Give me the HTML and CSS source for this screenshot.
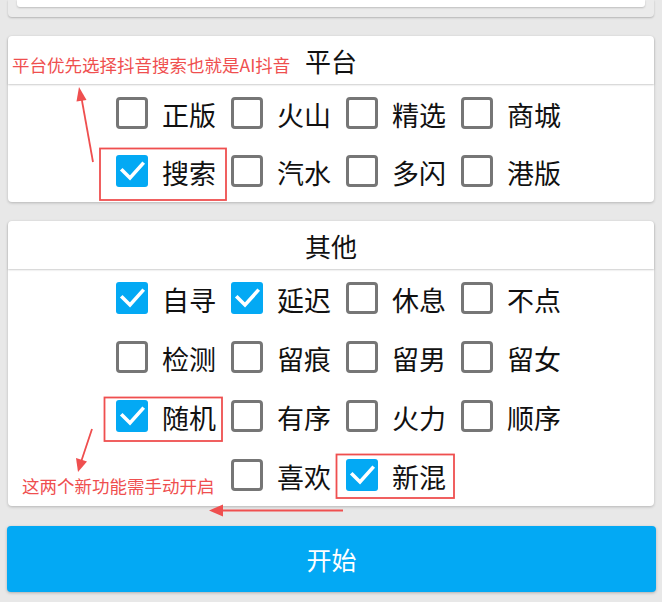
FILE: index.html
```html
<!DOCTYPE html>
<html lang="zh-CN">
<head>
<meta charset="utf-8">
<title>设置</title>
<link rel="stylesheet" href="styles.css">
</head>
<body>
<div class="page">
  <div class="top-panel"><div class="top-card"></div></div>

  <section class="panel">
    <div class="panel-head">平台</div>
    <div class="options options-platform">
      <div class="row">
        <label class="item"><span class="box"></span><span class="label">正版</span></label>
        <label class="item"><span class="box"></span><span class="label">火山</span></label>
        <label class="item"><span class="box"></span><span class="label">精选</span></label>
        <label class="item"><span class="box"></span><span class="label">商城</span></label>
      </div>
      <div class="row">
        <label class="item"><span class="box checked"><svg viewBox="0 0 32 32"><path d="M6.5 15.5 L14 23 L26.5 9"/></svg></span><span class="label">搜索</span></label>
        <label class="item"><span class="box"></span><span class="label">汽水</span></label>
        <label class="item"><span class="box"></span><span class="label">多闪</span></label>
        <label class="item"><span class="box"></span><span class="label">港版</span></label>
      </div>
    </div>
  </section>

  <section class="panel">
    <div class="panel-head">其他</div>
    <div class="options options-other">
      <div class="row">
        <label class="item"><span class="box checked"><svg viewBox="0 0 32 32"><path d="M6.5 15.5 L14 23 L26.5 9"/></svg></span><span class="label">自寻</span></label>
        <label class="item"><span class="box checked"><svg viewBox="0 0 32 32"><path d="M6.5 15.5 L14 23 L26.5 9"/></svg></span><span class="label">延迟</span></label>
        <label class="item"><span class="box"></span><span class="label">休息</span></label>
        <label class="item"><span class="box"></span><span class="label">不点</span></label>
      </div>
      <div class="row">
        <label class="item"><span class="box"></span><span class="label">检测</span></label>
        <label class="item"><span class="box"></span><span class="label">留痕</span></label>
        <label class="item"><span class="box"></span><span class="label">留男</span></label>
        <label class="item"><span class="box"></span><span class="label">留女</span></label>
      </div>
      <div class="row">
        <label class="item"><span class="box checked"><svg viewBox="0 0 32 32"><path d="M6.5 15.5 L14 23 L26.5 9"/></svg></span><span class="label">随机</span></label>
        <label class="item"><span class="box"></span><span class="label">有序</span></label>
        <label class="item"><span class="box"></span><span class="label">火力</span></label>
        <label class="item"><span class="box"></span><span class="label">顺序</span></label>
      </div>
      <div class="row">
        <label class="item"><span class="box"></span><span class="label">喜欢</span></label>
        <label class="item"><span class="box checked"><svg viewBox="0 0 32 32"><path d="M6.5 15.5 L14 23 L26.5 9"/></svg></span><span class="label">新混</span></label>
      </div>
    </div>
  </section>

  <button class="start" type="button">开始</button>

  <svg class="annot" viewBox="0 0 662 602" width="662" height="602">
    <g fill="none" stroke="#ef4f4f" stroke-width="1.8">
      <rect x="100" y="148.5" width="126" height="51.5"/>
      <rect x="104.5" y="397.5" width="117.5" height="43.5"/>
      <rect x="336.5" y="454.5" width="117.5" height="43.5"/>
      <line x1="93" y1="162" x2="81.5" y2="98"/>
      <line x1="92" y1="429" x2="81" y2="462"/>
      <line x1="343" y1="510.5" x2="220" y2="510.5"/>
    </g>
    <g fill="#ef4f4f">
      <polygon points="79,87 76.5,101.5 86.5,100"/>
      <polygon points="78,472 76,458 87,461.5"/>
      <polygon points="209,510.5 223,504.5 223,516.5"/>
    </g>
  </svg>
  <span class="note note-platform">平台优先选择抖音搜索也就是AI抖音</span>
  <span class="note note-new">这两个新功能需手动开启</span>
</div>
</body>
</html>
```

FILE: styles.css
```css
* { box-sizing: border-box; }

html, body {
  margin: 0;
  padding: 0;
}

body {
  background: #e8e8e8;
  font-family: "Noto Sans CJK SC", "Noto Sans", sans-serif;
  color: #111;
  width: 662px;
  height: 602px;
  overflow: hidden;
}

.page {
  position: relative;
  width: 662px;
  height: 602px;
  display: flex;
  flex-direction: column;
}

.top-panel {
  margin: 0 8px;
  height: 17px;
  background: #ebebeb;
  border-radius: 0 0 4px 4px;
  box-shadow: 0 1px 2px rgba(0, 0, 0, 0.22);
}

.top-card {
  margin: 0 9px;
  height: 7px;
  background: #fff;
  border-radius: 0 0 3px 3px;
  box-shadow: 0 1px 2px rgba(0, 0, 0, 0.2);
}

.panel {
  margin: 19px 8px 0;
  background: #fff;
  border-radius: 4px;
  box-shadow: 0 1px 3px rgba(0, 0, 0, 0.22);
  display: flex;
  flex-direction: column;
}

.panel-head {
  position: relative;
  height: 48px;
  display: flex;
  align-items: center;
  justify-content: center;
  font-size: 26px;
  line-height: 1;
  padding-top: 2px;
  color: #111;
  border-radius: 4px 4px 0 0;
  box-shadow: 0 1px 2px rgba(0, 0, 0, 0.2);
  z-index: 1;
}

.options {
  display: flex;
  flex-direction: column;
  padding-top: 1px;
}

.options-platform { height: 118px; }
.options-other { height: 237px; }

.row {
  height: 59px;
  display: flex;
  justify-content: center;
  align-items: center;
}

.item {
  width: 115px;
  display: flex;
  align-items: center;
  padding-left: 15px;
}

.box {
  width: 32px;
  height: 32px;
  flex: none;
  border: 3.4px solid #767676;
  border-radius: 4px;
  margin-right: 14px;
  margin-top: -3px;
  display: flex;
}

.box.checked {
  border: none;
  background: #03a9f4;
  border-radius: 3px;
}

.box svg {
  width: 32px;
  height: 32px;
}

.box svg path {
  fill: none;
  stroke: #fff;
  stroke-width: 3.6;
  stroke-linecap: square;
  stroke-linejoin: miter;
}

.label {
  font-size: 27px;
  line-height: 1;
  color: #111;
  white-space: nowrap;
}

.start {
  margin: 20px 6px 0 7px;
  height: 66px;
  border: none;
  border-radius: 4px;
  background: #03a9f4;
  color: #fff;
  font-family: "Noto Sans CJK SC", "Noto Sans", sans-serif;
  font-size: 25px;
  box-shadow: 0 1px 3px rgba(0, 0, 0, 0.25);
  padding: 0;
}

.annot {
  position: absolute;
  left: 0;
  top: 0;
  pointer-events: none;
  z-index: 5;
}

.note {
  position: absolute;
  z-index: 6;
  color: #ef4f4f;
  font-size: 17.5px;
  line-height: 1;
  white-space: nowrap;
  font-family: "Noto Sans CJK SC", "Noto Sans", sans-serif;
}

.note-platform {
  left: 12px;
  top: 56px;
}

.note-new {
  left: 22px;
  top: 477px;
}
```
